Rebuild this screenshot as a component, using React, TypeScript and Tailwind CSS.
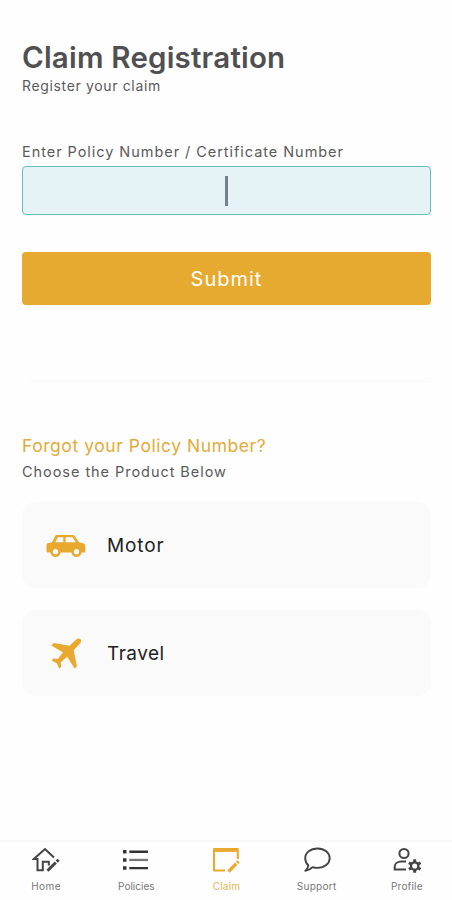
import type { ReactNode } from 'react';

interface Item {
  name: string;
  icon: ReactNode;
  labelClass: string;
}

const CarIcon = () => (
  <svg width="40" height="24" viewBox="0 0 40 24" fill="none">
    <path
      fillRule="evenodd"
      clipRule="evenodd"
      fill="#e8a92e"
      d="M11 1h15.500c1 0 1.800.400 2.300 1.200L33 8.200l4 1c1.500.400 2.300 1.200 2.300 2.600V17c0 1-.600 1.600-1.500 1.600H2.500C1.200 18.600.500 18 .500 17v-5.400c0-1.400.700-2.200 2-2.500L6 8.300l3-5.900C9.400 1.500 10 1 11 1Zm.900 2.200L9.300 8.300h8V3.200h-5.400Zm7.700 0v5.100h10.200l-3.300-5.100h-6.900Z"
    />
    <circle cx="9.500" cy="17.700" r="3.900" fill="#fafafa" stroke="#e8a92e" strokeWidth="2.600" />
    <circle cx="30.500" cy="17.700" r="3.900" fill="#fafafa" stroke="#e8a92e" strokeWidth="2.600" />
  </svg>
);

const PlaneIcon = () => (
  <svg width="32" height="32" viewBox="0 0 32 32" fill="#e8a92e">
    <path d="M30.500 1.300c1.200 1.200.8 2.700-.5 4.100l-6.300 6.800 3.200 16.200-2.300 2.200-7.400-11.800-6.600 5.600.7 4.600-2.100 1.600-2.400-5.300-5.300-2.700 1.800-2 4.500.3 5.200-6.500L1.500 7.500l2-2.500 16 2.700 6.700-6.300c1.400-1.200 3.100-1.300 4.300-.1Z" />
  </svg>
);

const HomeIcon = () => (
  <svg width="28" height="26" viewBox="0 0 28 26" fill="none" stroke="#444" strokeWidth="2">
    <path d="M22 10.500 13 2 1.800 12h3.700v11.200h5.300v-8.500h6v3.800" />
    <path d="m15.500 23.800 8.300-8.300" strokeWidth="3" />
    <path d="m24.700 14.600 1.900-1.900" strokeWidth="3" />
  </svg>
);

const ListIcon = () => (
  <svg width="26" height="22" viewBox="0 0 26 22" fill="#333">
    <path d="M0 1h3.500v3.500H0zM0 9.200h3.500v3.500H0zM0 17.300h3.500v3.500H0zM6.300 1.600h18.700v2.300H6.300zM6.300 17.900h18.700v2.300H6.300z" />
    <path d="M6.300 9.800h18.700v2.300H6.300z" fill="#777" />
  </svg>
);

const ClaimIcon = () => (
  <svg width="28" height="26" viewBox="0 0 28 26" fill="none" stroke="#e8a92e">
    <path d="M25.800 12V2H2v21.500h11" strokeWidth="2" strokeLinejoin="round" />
    <path d="M2 3h23.800" strokeWidth="3.800" />
    <path d="m16.500 24.500 7.800-7.800" strokeWidth="3.200" />
    <path d="m25.100 15.900 1.500-1.500" strokeWidth="3.200" />
  </svg>
);

const ChatIcon = () => (
  <svg width="28" height="26" viewBox="0 0 28 26" fill="none" stroke="#444" strokeWidth="1.900">
    <path d="M14.500 1.500c7 0 12.200 4.200 12.200 9.700s-5.200 9.700-12.200 9.700c-1.800 0-3.500-.3-5-.8-1.700 2-4.200 3.300-7.200 3.700 1.700-1.400 2.800-3.300 3.100-5.500-2-1.800-3.200-4.300-3.200-7.100 0-5.500 5.300-9.700 12.300-9.700Z" strokeLinejoin="round" />
  </svg>
);

const ProfileIcon = () => (
  <svg width="30" height="26" viewBox="0 0 30 26" fill="none" stroke="#444" strokeWidth="2">
    <circle cx="12" cy="6.500" r="4.600" />
    <path d="M14 14.500H9.500c-4 0-6.800 2.200-6.800 5.200v2.800h11.300" />
    <circle cx="22.700" cy="19" r="3.700" strokeWidth="2.300" />
    <path
      d="M22.700 15v-2.700M22.700 23v2.700M26.200 17l2.300-1.300M19.200 21l-2.300 1.300M26.200 21l2.300 1.300M19.200 17l-2.300-1.300"
      strokeWidth="2.900"
    />
  </svg>
);

const products: Item[] = [
  { name: 'Motor', icon: <CarIcon />, labelClass: 'tracking-[0.9px]' },
  { name: 'Travel', icon: <PlaneIcon />, labelClass: 'tracking-[0.5px]' },
];

const tabs: Item[] = [
  { name: 'Home', icon: <HomeIcon />, labelClass: 'text-[#777] tracking-[0.4px]' },
  { name: 'Policies', icon: <ListIcon />, labelClass: 'text-[#777]' },
  { name: 'Claim', icon: <ClaimIcon />, labelClass: 'text-[#dfb75c] tracking-[0.2px]' },
  { name: 'Support', icon: <ChatIcon />, labelClass: 'text-[#777] tracking-[0.3px]' },
  { name: 'Profile', icon: <ProfileIcon />, labelClass: 'text-[#777] tracking-[0.2px]' },
];

export default function App() {
  return (
    <div className="flex h-[900px] w-[452px] flex-col bg-[#fefefe] font-['Inter',sans-serif] text-[#5a5a5a]">
      <main className="flex flex-1 flex-col pl-[22px] pr-[21px] pt-[38px]">
        <h1 className="text-[29.5px] font-semibold leading-[38px] tracking-[0.2px] text-[#505052]">
          Claim Registration
        </h1>
        <p className="text-[14px] leading-5 tracking-[0.65px]">Register your claim</p>

        <p className="mt-[46px] text-[14.5px] leading-5 tracking-[0.95px]">
          Enter Policy Number / Certificate Number
        </p>
        <div className="mt-1 flex h-[49px] items-center justify-center rounded-[4px] border-[1.5px] border-[#69bcbc] bg-[#e5f3f7]">
          <span className="h-[30px] w-[3px] bg-[#6f8589]" />
        </div>

        <button className="mt-[37px] h-[53px] rounded-[4px] bg-[#e6aa31] text-[20px] tracking-[1px] text-white">
          Submit
        </button>

        <div className="ml-2 mt-[76px] h-px bg-[#f8f8f8]" />

        <h2 className="mt-[52px] text-[17.5px] leading-6 tracking-[0.55px] text-[#e3ab3a]">
          Forgot your Policy Number?
        </h2>
        <p className="mt-1 text-[14.5px] leading-5 tracking-[0.95px]">Choose the Product Below</p>

        <div className="mt-5 flex flex-col gap-[22px]">
          {products.map((product) => (
            <div key={product.name} className="flex h-[86px] items-center rounded-[14px] bg-[#fafafa] pl-6 pt-0.5">
              <div className="flex w-10 justify-center">{product.icon}</div>
              <span className={`ml-[21px] text-[19px] leading-6 text-[#222] ${product.labelClass}`}>
                {product.name}
              </span>
            </div>
          ))}
        </div>
      </main>

      <nav className="grid h-[60px] grid-cols-5 border-t-2 border-[#f7f7f7] pl-px">
        {tabs.map((tab) => (
          <div key={tab.name} className="flex flex-col items-center pt-1">
            <div className="flex h-[27px] items-center">{tab.icon}</div>
            <span className={`mt-[7px] text-[10px] leading-3 ${tab.labelClass}`}>{tab.name}</span>
          </div>
        ))}
      </nav>
    </div>
  );
}
